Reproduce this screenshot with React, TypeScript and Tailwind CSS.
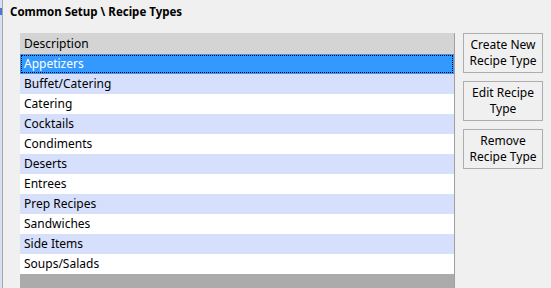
const rows = [
  "Appetizers",
  "Buffet/Catering",
  "Catering",
  "Cocktails",
  "Condiments",
  "Deserts",
  "Entrees",
  "Prep Recipes",
  "Sandwiches",
  "Side Items",
  "Soups/Salads",
];

const buttons = [
  ["Create New", "Recipe Type"],
  ["Edit Recipe", "Type"],
  ["Remove", "Recipe Type"],
];

export default function App() {
  return (
    <div
      className="flex h-[288px] w-[551px] overflow-hidden bg-[#f0f0f0] text-[12px] text-black"
      style={{ fontFamily: '"Noto Sans", "Open Sans", sans-serif' }}
    >
      <div className="relative w-[3px] shrink-0 border-r border-[#a0a8b8] bg-[#d6e0f0]">
        <div className="absolute left-0 top-[8px] h-[7px] w-[2px] bg-[#4a78d0]" />
      </div>
      <div className="flex flex-1 flex-col">
        <div className="h-[33px] pl-[7px] pt-[3px] text-[11.5px] font-bold leading-[18px]">
          Common Setup \ Recipe Types
        </div>
        <div className="flex gap-[8px] pl-[17px]">
          <div className="flex h-[255px] w-[435px] flex-col border-r border-[#a0a0a0] bg-[#ababab]">
            <div className="h-[21px] bg-[#d4d4d4] pl-[4px] leading-[22px]">Description</div>
            {rows.map((r, i) => (
              <div
                key={r}
                className={
                  i === 0
                    ? "h-[20px] bg-[#3399ff] pl-[4px] leading-[20px] text-white outline-1 outline-dotted -outline-offset-2 outline-black"
                    : i % 2 === 1
                    ? "h-[20px] bg-[#d6e0fd] pl-[4px] leading-[20px]"
                    : "h-[20px] bg-white pl-[4px] leading-[20px]"
                }
              >
                {r}
              </div>
            ))}
          </div>
          <div className="flex flex-col gap-[8px]">
            {buttons.map((b) => (
              <div
                key={b[0]}
                className="flex h-[40px] w-[80px] flex-col items-center justify-center border border-[#adadad] bg-[#f0f0f0] leading-[16px]"
              >
                <span>{b[0]}</span>
                <span>{b[1]}</span>
              </div>
            ))}
          </div>
        </div>
      </div>
    </div>
  );
}
